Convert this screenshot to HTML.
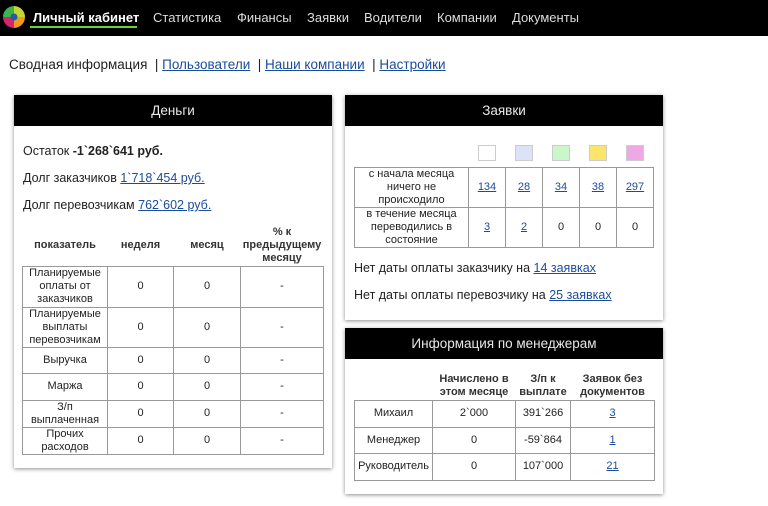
<!DOCTYPE html>
<html><head><meta charset="utf-8"><style>
*{box-sizing:border-box;margin:0;padding:0}
body{width:768px;height:506px;background:#fff;font-family:"Liberation Sans",Arial,sans-serif;color:#222;position:relative;overflow:hidden}
.nav{position:absolute;left:0;top:0;width:768px;height:36px;background:#000}
.nav span{position:absolute;top:10px;color:#ddd;font-size:13px}
a{color:#1a4c9c;text-decoration:underline}
.sub{position:absolute;top:57px;left:9px;font-size:13.5px;color:#222}
.panel{position:absolute;background:#fff;box-shadow:0 1px 4px rgba(0,0,0,.45)}
.hd{background:#000;color:#e8e8e8;height:31px;line-height:31px;text-align:center;font-size:13.5px}
table{position:absolute;border-collapse:collapse;font-size:11px;text-align:center;table-layout:fixed}
td{border:1px solid #999;padding:0;line-height:13px}
th{font-weight:bold;line-height:13px;padding:0;color:#333}
.t{position:absolute;font-size:12.5px;color:#222}
.sq{position:absolute;top:50px;width:18px;height:16px;border:1px solid #ccc}
</style></head><body>
<div class="nav">
<svg style="position:absolute;left:3px;top:6px" width="22" height="22" viewBox="0 0 22 22">
<path d="M11 11 L11 0 A11 11 0 0 0 0 11Z" fill="#3cb44b"/>
<path d="M11 11 L22 11 A11 11 0 0 0 11 0Z" fill="#c6d62f"/>
<path d="M11 11 L11 22 A11 11 0 0 0 22 11Z" fill="#f39a1c"/>
<path d="M11 11 L0 11 A11 11 0 0 0 11 22Z" fill="#d6246e"/>
<circle cx="11" cy="11" r="3.5" fill="#1e5fa8"/>
</svg>
<span style="left:33px;color:#fff;font-weight:bold">Личный кабинет</span>
<div style="position:absolute;left:30px;top:26px;width:107px;height:2px;background:#6ad13a"></div>
<span style="left:153px">Статистика</span>
<span style="left:237px">Финансы</span>
<span style="left:307px">Заявки</span>
<span style="left:364px">Водители</span>
<span style="left:437px">Компании</span>
<span style="left:512px">Документы</span>
</div>
<div class="sub">Сводная информация &nbsp;| <a>Пользователи</a> &nbsp;| <a>Наши компании</a> &nbsp;| <a>Настройки</a></div>

<div class="panel" style="left:14px;top:95px;width:318px;height:373px">
<div class="hd">Деньги</div>
<div class="t" style="left:9px;top:49px">Остаток <b>-1`268`641 руб.</b></div>
<div class="t" style="left:9px;top:76px">Долг заказчиков <a>1`718`454 руб.</a></div>
<div class="t" style="left:9px;top:103px">Долг перевозчикам <a>762`602 руб.</a></div>
<table style="left:8px;top:130px;width:301px">
<col style="width:85px"><col style="width:66px"><col style="width:67px"><col style="width:83px">
<tr style="height:41px"><th>показатель</th><th>неделя</th><th>месяц</th><th>% к предыдущему месяцу</th></tr>
<tr style="height:41px"><td>Планируемые оплаты от заказчиков</td><td>0</td><td>0</td><td>-</td></tr>
<tr style="height:40px"><td>Планируемые выплаты перевозчикам</td><td>0</td><td>0</td><td>-</td></tr>
<tr style="height:26px"><td>Выручка</td><td>0</td><td>0</td><td>-</td></tr>
<tr style="height:27px"><td>Маржа</td><td>0</td><td>0</td><td>-</td></tr>
<tr style="height:27px"><td>З/п выплаченная</td><td>0</td><td>0</td><td>-</td></tr>
<tr style="height:27px"><td>Прочих расходов</td><td>0</td><td>0</td><td>-</td></tr>
</table>
</div>

<div class="panel" style="left:345px;top:95px;width:318px;height:225px">
<div class="hd">Заявки</div>
<div class="sq" style="left:133px;background:#fff"></div>
<div class="sq" style="left:170px;background:#dde3f7"></div>
<div class="sq" style="left:207px;background:#c9f7c9"></div>
<div class="sq" style="left:244px;background:#fbe56a"></div>
<div class="sq" style="left:281px;background:#f0a8e4"></div>
<table style="left:9px;top:72px;width:299px">
<col style="width:114px"><col style="width:37px"><col style="width:37px"><col style="width:37px"><col style="width:37px"><col style="width:37px">
<tr style="height:40px"><td>с начала месяца ничего не происходило</td><td><a>134</a></td><td><a>28</a></td><td><a>34</a></td><td><a>38</a></td><td><a>297</a></td></tr>
<tr style="height:40px"><td>в течение месяца переводились в состояние</td><td><a>3</a></td><td><a>2</a></td><td>0</td><td>0</td><td>0</td></tr>
</table>
<div class="t" style="left:9px;top:166px">Нет даты оплаты заказчику на <a>14 заявках</a></div>
<div class="t" style="left:9px;top:193px">Нет даты оплаты перевозчику на <a>25 заявках</a></div>
</div>

<div class="panel" style="left:345px;top:328px;width:318px;height:166px">
<div class="hd">Информация по менеджерам</div>
<table style="left:9px;top:45px;width:300px">
<col style="width:78px"><col style="width:83px"><col style="width:55px"><col style="width:84px">
<tr style="height:27px"><th></th><th>Начислено в этом месяце</th><th>З/п к выплате</th><th>Заявок без документов</th></tr>
<tr style="height:27px"><td>Михаил</td><td>2`000</td><td>391`266</td><td><a>3</a></td></tr>
<tr style="height:26px"><td>Менеджер</td><td>0</td><td>-59`864</td><td><a>1</a></td></tr>
<tr style="height:27px"><td>Руководитель</td><td>0</td><td>107`000</td><td><a>21</a></td></tr>
</table>
</div>
</body></html>
